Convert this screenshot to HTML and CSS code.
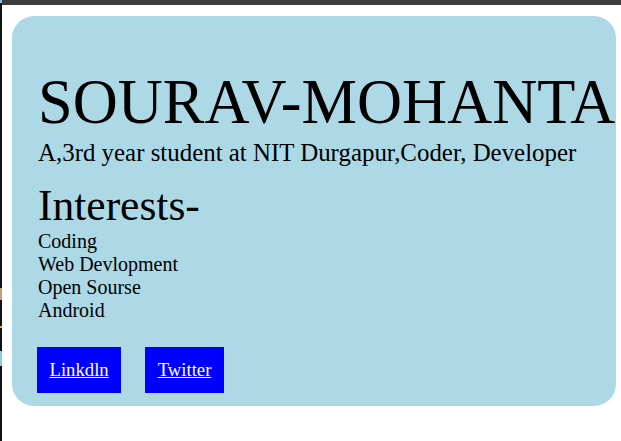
FILE: index.html
```html
<!DOCTYPE html>
<html>
<head>
<meta charset="utf-8">
<link rel="stylesheet" href="styles.css">
</head>
<body>
<div class="edge"></div>
<div class="page">
  <div class="card">
    <h1 class="name">SOURAV-MOHANTA</h1>
    <p class="tagline">A,3rd year student at NIT Durgapur,Coder, Developer</p>
    <h2 class="section">Interests-</h2>
    <ul class="interests">
      <li>Coding</li>
      <li>Web Devlopment</li>
      <li>Open Sourse</li>
      <li>Android</li>
    </ul>
    <div class="links">
      <a class="btn" href="#">Linkdln</a>
      <a class="btn" href="#">Twitter</a>
    </div>
  </div>
</div>
</body>
</html>
```

FILE: styles.css
```css
html, body {
  margin: 0;
  padding: 0;
  background: #ffffff;
}
body {
  font-family: "Liberation Serif", "Times New Roman", serif;
  color: #000;
  border-top: 5px solid #3c3c3c;
  min-height: 436px;
}
.edge {
  position: fixed;
  left: 0;
  top: 0;
  width: 2px;
  height: 100%;
  background: linear-gradient(to bottom,
    #7fc4e0 0, #7fc4e0 3px,
    #111 3px, #111 288px,
    #c89a7e 288px, #c89a7e 300px,
    #111 300px, #111 326px,
    #e8b020 326px, #e8b020 328px,
    #111 328px, #111 351px,
    #8cc8e8 351px, #8cc8e8 366px,
    #111 366px, #111 100%);
}
.page {
  padding: 11px 0 0 12px;
}
.card {
  width: 604px;
  height: 390px;
  box-sizing: border-box;
  background: #add8e6;
  border-radius: 22px;
  padding: 50px 0 0 26px;
  overflow: visible;
}
.name {
  margin: 0;
  font-size: 62.4px;
  font-weight: normal;
  white-space: nowrap;
}
.tagline {
  margin: 1px 0 0;
  font-size: 24.9px;
  white-space: nowrap;
}
.section {
  margin: 13px 0 0;
  font-size: 43.5px;
  font-weight: normal;
}
.interests {
  list-style: none;
  margin: 0;
  padding: 0;
  font-size: 20px;
}
.links {
  display: flex;
  gap: 25px;
  margin-top: 25px;
}
.btn {
  display: block;
  background: #0000ff;
  color: #ffffff;
  font-size: 18.7px;
  padding: 12px 12.5px;
  margin-left: -1px;
}
```
